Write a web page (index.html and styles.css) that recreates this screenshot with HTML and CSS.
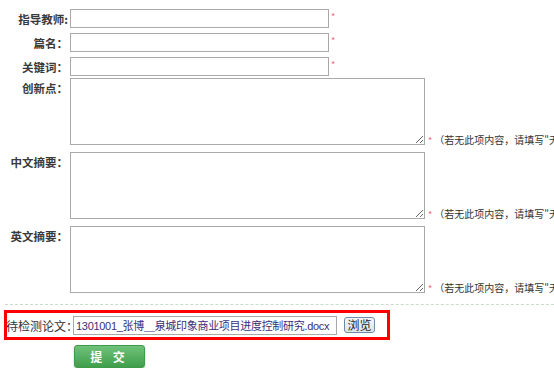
FILE: index.html
```html
<!DOCTYPE html>
<html lang="zh-CN">
  <head>
    <meta charset="UTF-8" />
    <title>论文检测</title>
    <link rel="stylesheet" href="styles.css">
  </head>
  <body>
    <div class="form">
      <div class="row">
        <label class="lbl">指导教师:</label>
        <input class="txt" type="text" />
        <span class="req">*</span>
      </div>
      <div class="row">
        <label class="lbl">篇名：</label>
        <input class="txt" type="text" />
        <span class="req">*</span>
      </div>
      <div class="row">
        <label class="lbl">关键词：</label>
        <input class="txt" type="text" />
        <span class="req">*</span>
      </div>

      <div class="row area-row">
        <label class="lbl top">创新点：</label>
        <textarea class="area"></textarea>
        <span class="note"><span class="req">*</span>（若无此项内容，请填写"无"）</span>
      </div>
      <div class="row area-row">
        <label class="lbl top">中文摘要：</label>
        <textarea class="area"></textarea>
        <span class="note"><span class="req">*</span>（若无此项内容，请填写"无"）</span>
      </div>
      <div class="row area-row">
        <label class="lbl top">英文摘要：</label>
        <textarea class="area"></textarea>
        <span class="note"><span class="req">*</span>（若无此项内容，请填写"无"）</span>
      </div>

      <div class="sep"></div>

      <div class="upload">
        <label class="up-lbl">待检测论文：</label>
        <input class="file" type="text" value="1301001_张博＿泉城印象商业项目进度控制研究.docx" readonly />
        <button class="browse" type="button">浏览</button>
      </div>

      <div class="actions">
        <button class="submit" type="button">提 交</button>
      </div>
    </div>
  </body>
</html>
```

FILE: styles.css
```css
* {
  margin: 0;
  padding: 0;
  box-sizing: border-box;
}
body {
  font-family: "Noto Sans CJK SC", "DejaVu Sans", sans-serif;
  font-size: 12px;
  color: #333;
  background: #fff;
  overflow: hidden;
}
.form {
  padding-top: 9px;
  width: 554px;
  overflow: hidden;
}
.row {
  display: flex;
  align-items: center;
  height: 19px;
  margin-bottom: 5px;
  white-space: nowrap;
}
.lbl {
  width: 70px;
  flex: none;
  text-align: right;
  font-weight: bold;
  font-size: 11.5px;
  color: #3a3a3a;
  padding-right: 2px;
}
.txt {
  flex: none;
  width: 259px;
  height: 19px;
  border: 1px solid #a9a9a9;
  background: #fff;
}
.req {
  color: #f06a7c;
  font-size: 9px;
  margin-left: 2px;
  align-self: flex-start;
  line-height: 12px;
  margin-top: 2px;
}
.area-row {
  height: 67px;
  margin-bottom: 7px;
  align-items: flex-start;
}
.row:nth-child(3) {
  margin-bottom: 2px;
}
.lbl.top {
  padding-top: 2px;
}
.area {
  flex: none;
  width: 355px;
  height: 67px;
  border: 1px solid #a9a9a9;
  resize: both;
  font: inherit;
}
.note {
  flex: none;
  align-self: flex-end;
  font-size: 10px;
  line-height: 12px;
  margin-left: 1px;
  margin-bottom: -2px;
}
.note .req {
  margin-right: 2px;
}
.sep {
  margin: 11px 0 5px 5px;
  border-top: 1px dashed #c9dcc9;
}
.upload {
  display: flex;
  align-items: center;
  width: 386px;
  height: 30px;
  margin-left: 4px;
  border: 3px solid #f00;
  white-space: nowrap;
}
.up-lbl {
  flex: none;
  font-size: 12px;
  width: 67px;
  margin-left: -1px;
}
.file {
  flex: none;
  width: 264px;
  height: 19px;
  border: 1px solid #a9a9a9;
  color: #3a2d7a;
  font-family: "Liberation Sans", "Noto Sans CJK SC", sans-serif;
  font-size: 11px;
  letter-spacing: -0.3px;
  padding-left: 2px;
}
.browse {
  flex: none;
  margin-left: 7px;
  width: 31px;
  height: 16px;
  font-size: 12px;
  line-height: 12px;
  font-family: inherit;
  color: #222;
  border: 1px solid #6f8aa8;
  border-radius: 3px;
  background: linear-gradient(#f4f6f9, #dde3ea);
}
.actions {
  padding: 5px 0 0 74px;
}
.submit {
  width: 71px;
  height: 23px;
  border: 1px solid #3f9a4a;
  border-radius: 3px;
  background: linear-gradient(#6fc279, #409e4b);
  color: #fff;
  font-family: inherit;
  font-size: 12px;
  font-weight: bold;
  letter-spacing: 4px;
  box-shadow: 0 1px 2px rgba(0, 0, 0, 0.25);
}
```
